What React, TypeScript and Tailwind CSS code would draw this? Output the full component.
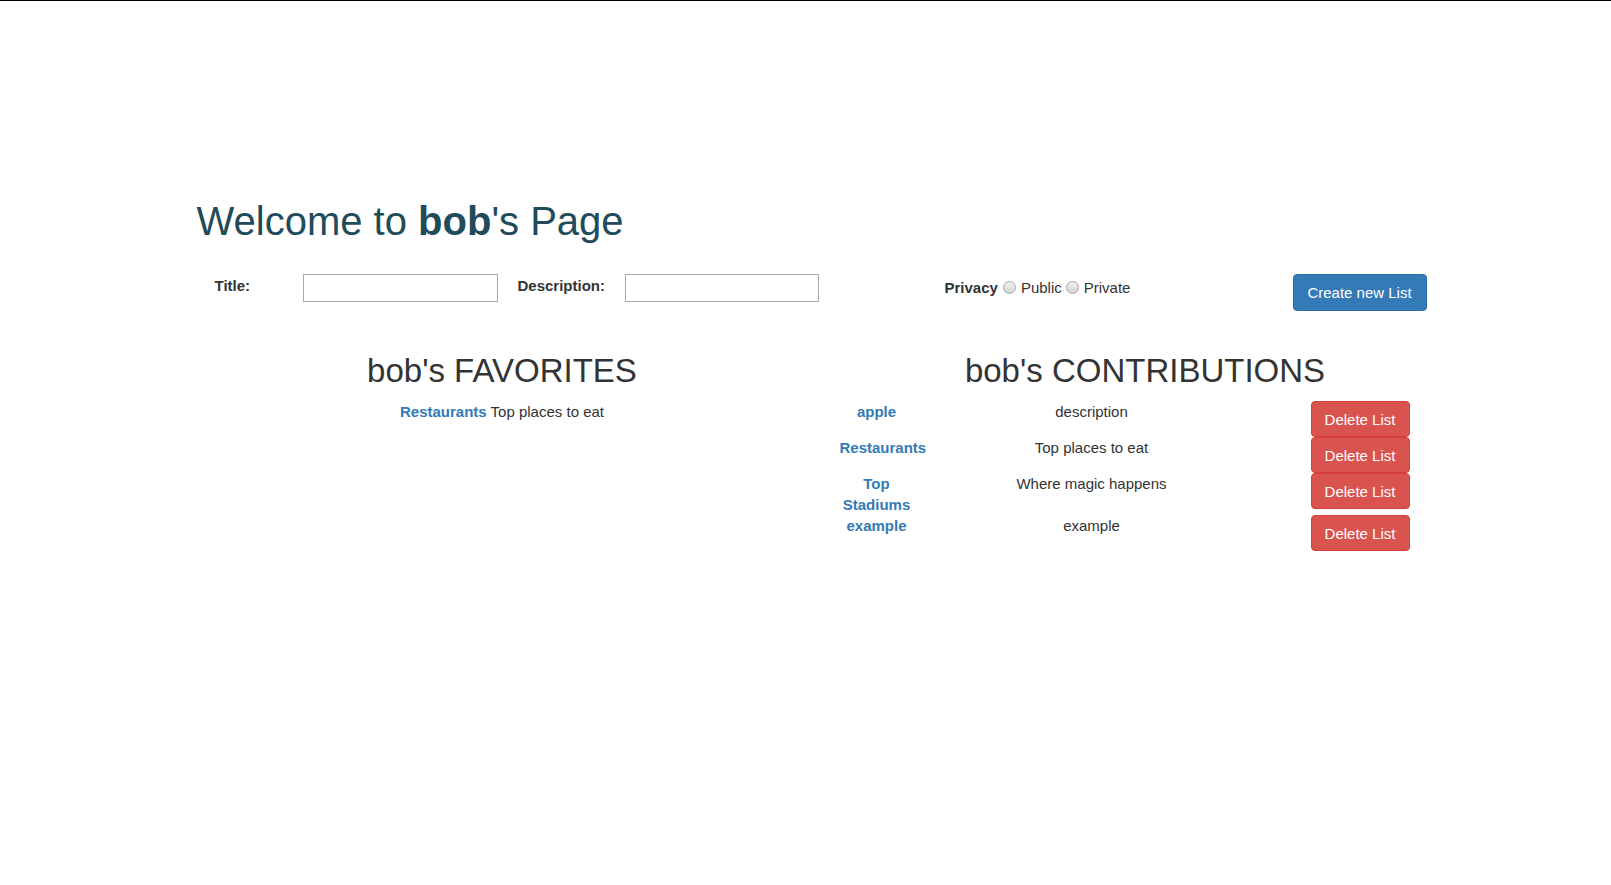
import React from "react";

const rows = [
  { name: "apple", desc: "description" },
  { name: "Restaurants", desc: "Top places to eat" },
  { name: "Top Stadiums", desc: "Where magic happens" },
  { name: "example", desc: "example" },
];

function Radio() {
  return (
    <span className="inline-block h-[13px] w-[13px] shrink-0 rounded-full border border-[#a6a6a6] bg-linear-to-b from-[#f2f2f2] to-[#d4d4d4]" />
  );
}

export default function App() {
  return (
    <div className="min-h-screen w-full border-t border-black bg-white font-['Liberation_Sans',Arial,sans-serif] text-[15px] leading-[21px] text-[#333333]">
      <div className="mx-auto w-[1220px] pt-[198px]">
        <h1 className="ml-[1px] text-[40px] font-normal leading-[44px] text-[#1f4b5b]">
          Welcome to <b className="font-bold">bob</b>'s Page
        </h1>

        <div className="mt-[31px] flex items-start">
          <label className="ml-[19px] mt-[1px] w-[88px] shrink-0 font-bold">Title:</label>
          <input
            type="text"
            className="h-[28px] w-[195px] shrink-0 border border-[#a9a9a9] bg-white px-[2px] outline-none"
          />
          <label className="ml-[20px] mt-[1px] w-[107px] shrink-0 font-bold">Description:</label>
          <input
            type="text"
            className="h-[28px] w-[194px] shrink-0 border border-[#a9a9a9] bg-white px-[2px] outline-none"
          />
          <div className="ml-[126px] mt-[3px] flex h-[21px] w-[348px] shrink-0 items-center">
            <span className="font-bold">Privacy</span>
            <span className="ml-[5px] mr-[5px] flex">
              <Radio />
            </span>
            <span>Public</span>
            <span className="ml-[4px] mr-[5px] flex">
              <Radio />
            </span>
            <span>Private</span>
          </div>
          <button className="flex h-[37px] w-[134px] shrink-0 items-center justify-center rounded-[4px] border border-[#2e6da4] bg-[#337ab7] text-[15px] text-white">
            Create new List
          </button>
        </div>

        <div className="-ml-[15px] mt-[42px] flex">
          <div className="flex w-[643px] shrink-0 flex-col items-center">
            <h2 className="mb-[12px] text-[33px] font-normal leading-[36px] text-[#333333]">
              bob's FAVORITES
            </h2>
            <p>
              <a href="#" className="font-bold text-[#337ab7]">
                Restaurants
              </a>{" "}
              Top places to eat
            </p>
          </div>

          <div className="w-[643px] shrink-0">
            <h2 className="mb-[12px] text-center text-[33px] font-normal leading-[36px] text-[#333333]">
              bob's CONTRIBUTIONS
            </h2>
            <div className="grid grid-cols-[106px_324px_213px] items-start">
              {rows.map((r, i) => (
                <React.Fragment key={i}>
                  <div className="px-[16px] text-center">
                    <a href="#" className="font-bold text-[#337ab7]">
                      {r.name}
                    </a>
                  </div>
                  <div className="px-[16px] text-center">{r.desc}</div>
                  <div className="flex justify-center">
                    <button className="flex h-[36px] w-[99px] items-center justify-center rounded-[4px] border border-[#d43f3a] bg-[#d9534f] text-[15px] text-white">
                      Delete List
                    </button>
                  </div>
                </React.Fragment>
              ))}
            </div>
          </div>
        </div>
      </div>
    </div>
  );
}
